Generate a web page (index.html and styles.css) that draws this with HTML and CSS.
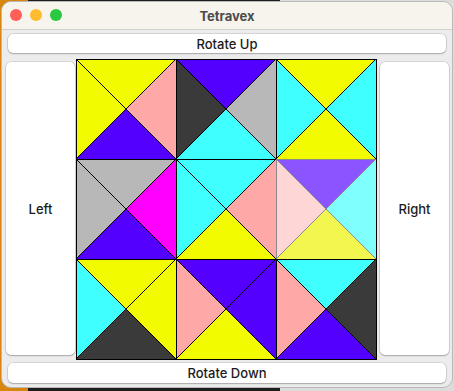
FILE: index.html
```html
<!DOCTYPE html>
<html lang="en">
<head>
    <meta charset="UTF-8">
    <title>Tetravex</title>
    <link rel="stylesheet" href="styles.css">
</head>
<body>
    <div class="window">
        <div class="titlebar">
            <div class="lights">
                <span class="light red"></span>
                <span class="light amber"></span>
                <span class="light green"></span>
            </div>
            <div class="title">Tetravex</div>
        </div>

        <div class="content">
            <div class="north"><button class="btn">Rotate Up</button></div>
            <div class="middle">
                <div class="west"><button class="btn tall">Left</button></div>
                <div class="board" id="board"></div>
                <div class="east"><button class="btn tall">Right</button></div>
            </div>
            <div class="south"><button class="btn">Rotate Down</button></div>
        </div>
    </div>

    <script>
        // edge order: top, right, bottom, left
        const C = {
            y: '#f3fb00', b: '#5400ff', p: '#ffa8a8', d: '#3a3a3a',
            g: '#b8b8b8', c: '#40ffff', m: '#ff00fe',
            P: '#8a55ff', Cl: '#80ffff', Y: '#f4f650', K: '#ffd6d6'
        };
        const tiles = [
            ['y', 'p', 'b', 'y'],
            ['b', 'g', 'c', 'd'],
            ['y', 'c', 'y', 'c'],
            ['g', 'm', 'b', 'g'],
            ['c', 'p', 'y', 'c'],
            ['P', 'Cl', 'Y', 'K', true],
            ['y', 'y', 'd', 'c'],
            ['b', 'b', 'y', 'p'],
            ['c', 'd', 'b', 'p']
        ];
        const shapes = [
            '0,0 100,0 50,50',
            '100,0 100,100 50,50',
            '0,100 100,100 50,50',
            '0,0 0,100 50,50'
        ];

        const board = document.getElementById('board');
        tiles.forEach(t => {
            const stroke = t[4] ? '#8a8a8a' : '#000';
            let polys = '';
            for (let i = 0; i < 4; i++) {
                polys += `<polygon points="${shapes[i]}" fill="${C[t[i]]}" stroke="${stroke}" />`;
            }
            board.innerHTML += `
                <div class="tile">
                    <svg viewBox="0 0 100 100" width="100" height="100" shape-rendering="crispEdges">${polys}</svg>
                </div>`;
        });
    </script>
</body>
</html>
```

FILE: styles.css
```css
html, body { margin: 0; height: 100%; }
body {
    background: linear-gradient(to right, #d9860e 0, #d9860e 28px, #1d1d1d 28px, #1d1d1d 280px, #dcdcdc 280px);
    font-family: Inter, "Noto Sans", sans-serif;
    overflow: hidden;
}

.window {
    margin: 1px 1px 0 1px;
    height: 387px;
    background: #ececec;
    border: 1px solid #b9b9b9;
    border-radius: 10px;
    overflow: hidden;
    box-sizing: border-box;
    display: flex;
    flex-direction: column;
}

.titlebar {
    height: 27px;
    flex: none;
    background: #f7f3ed;
    border-bottom: 1px solid #d2d0cc;
    position: relative;
    display: flex;
    align-items: center;
    justify-content: center;
}
.lights { position: absolute; left: 8px; top: 7px; display: flex; gap: 8px; }
.light { width: 12px; height: 12px; border-radius: 50%; }
.red { background: #ff5f57; }
.amber { background: #febc2e; }
.green { background: #28c840; }
.title { font-size: 13px; font-weight: 700; color: #4b4b4b; }

.content { flex: 1; display: flex; flex-direction: column; }

.north { height: 29px; flex: none; padding: 4px 6px 0 6px; box-sizing: border-box; }
.north .btn { height: 19px; }
.south { height: 26px; flex: none; padding: 3px 6px 0 6px; box-sizing: border-box; }

.btn {
    display: block;
    width: 100%;
    height: 20px;
    padding: 0;
    border: none;
    border-radius: 5px;
    background: #fff;
    box-shadow: 0 0 0 0.5px rgba(0, 0, 0, 0.18), 0 1px 1.5px rgba(0, 0, 0, 0.22);
    font-family: inherit;
    font-size: 13px;
    font-weight: 500;
    color: #1b1b1b;
}

.middle { display: flex; height: 301px; flex: none; }
.west { width: 74px; padding: 3px 1px 5px 4px; box-sizing: border-box; }
.east { width: 75px; padding: 3px 3px 5px 3px; box-sizing: border-box; }
.tall { height: 100%; }

.board {
    width: 301px;
    height: 301px;
    flex: none;
    box-sizing: border-box;
    display: grid;
    grid-template-columns: repeat(3, 100px);
    grid-template-rows: repeat(3, 100px);
    border-right: 1px solid #000;
    border-bottom: 1px solid #000;
}
.tile { width: 100px; height: 100px; }
.tile svg { display: block; }
```
